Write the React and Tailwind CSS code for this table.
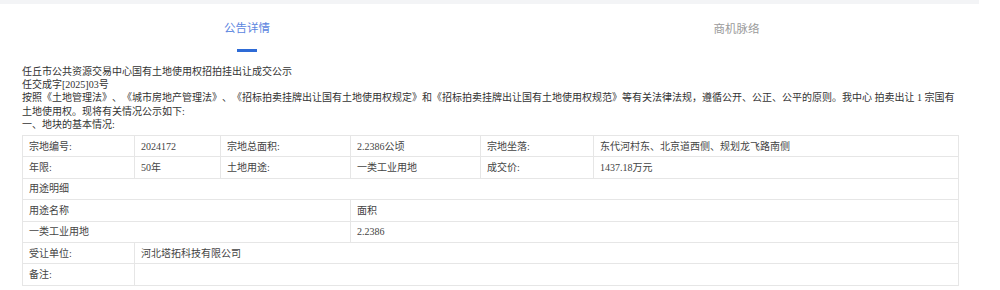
import React from 'react';

const FONT = { fontFamily: '"Liberation Serif", "Noto Sans CJK SC", serif' };

const cell = 'border border-[#e6e6e6] px-[6px] h-[21.4px] align-middle font-normal text-left';

export default function App() {
  return (
    <div className="w-[1000px] h-[290px] bg-white overflow-hidden" style={FONT}>
      <div className="w-[979px]">
        {/* top strip */}
        <div className="h-[4px] bg-[#f3f4f6]" />

        {/* tabs */}
        <div className="flex h-[53px]">
          <div className="w-[494px] flex flex-col items-center pt-[14px]">
            <span className="text-[11.5px] leading-[18px] text-[#5b86e0]" style={{ fontFamily: '"Noto Sans CJK SC", sans-serif' }}>公告详情</span>
            <span className="mt-[13px] w-[20px] h-[3px] bg-[#2e6bd6]" />
          </div>
          <div className="flex-1 flex flex-col items-center pt-[15px]">
            <span className="text-[11.5px] leading-[18px] text-[#9a9a9a]" style={{ fontFamily: '"Noto Sans CJK SC", sans-serif' }}>商机脉络</span>
          </div>
        </div>

        {/* body */}
        <div className="pl-[22px] pr-[20px] pt-[8px] text-[10px] leading-[13.2px] text-[#333] [text-spacing-trim:space-all]">
          <p>任丘市公共资源交易中心国有土地使用权招拍挂出让成交公示</p>
          <p>任交成字[2025]03号</p>
          <p>
            按照《土地管理法》、《城市房地产管理法》、《招标拍卖挂牌出让国有土地使用权规定》和《招标拍卖挂牌出让国有土地使用权规范》等有关法律法规，遵循公开、公正、公平的原则。我中心 拍卖出让 1 宗国有
            <br />
            土地使用权。现将有关情况公示如下:
          </p>
          <p>一、地块的基本情况:</p>

          <table className="mt-[4px] w-[937px] border-collapse table-fixed text-[#444]">
            <colgroup>
              <col className="w-[112px]" />
              <col className="w-[86px]" />
              <col className="w-[130px]" />
              <col className="w-[130px]" />
              <col className="w-[113px]" />
              <col />
            </colgroup>
            <tbody>
              <tr>
                <td className={cell}>宗地编号:</td>
                <td className={cell}>2024172</td>
                <td className={cell}>宗地总面积:</td>
                <td className={cell}>2.2386公顷</td>
                <td className={cell}>宗地坐落:</td>
                <td className={cell}>东代河村东、北京道西侧、规划龙飞路南侧</td>
              </tr>
              <tr>
                <td className={cell}>年限:</td>
                <td className={cell}>50年</td>
                <td className={cell}>土地用途:</td>
                <td className={cell}>一类工业用地</td>
                <td className={cell}>成交价:</td>
                <td className={cell}>1437.18万元</td>
              </tr>
              <tr>
                <td className={cell} colSpan={6}>用途明细</td>
              </tr>
              <tr>
                <td className={cell} colSpan={3}>用途名称</td>
                <td className={cell} colSpan={3}>面积</td>
              </tr>
              <tr>
                <td className={cell} colSpan={3}>一类工业用地</td>
                <td className={cell} colSpan={3}>2.2386</td>
              </tr>
              <tr>
                <td className={cell}>受让单位:</td>
                <td className={cell} colSpan={5}>河北塔拓科技有限公司</td>
              </tr>
              <tr>
                <td className={cell}>备注:</td>
                <td className={cell} colSpan={5}></td>
              </tr>
            </tbody>
          </table>
        </div>
      </div>
    </div>
  );
}
